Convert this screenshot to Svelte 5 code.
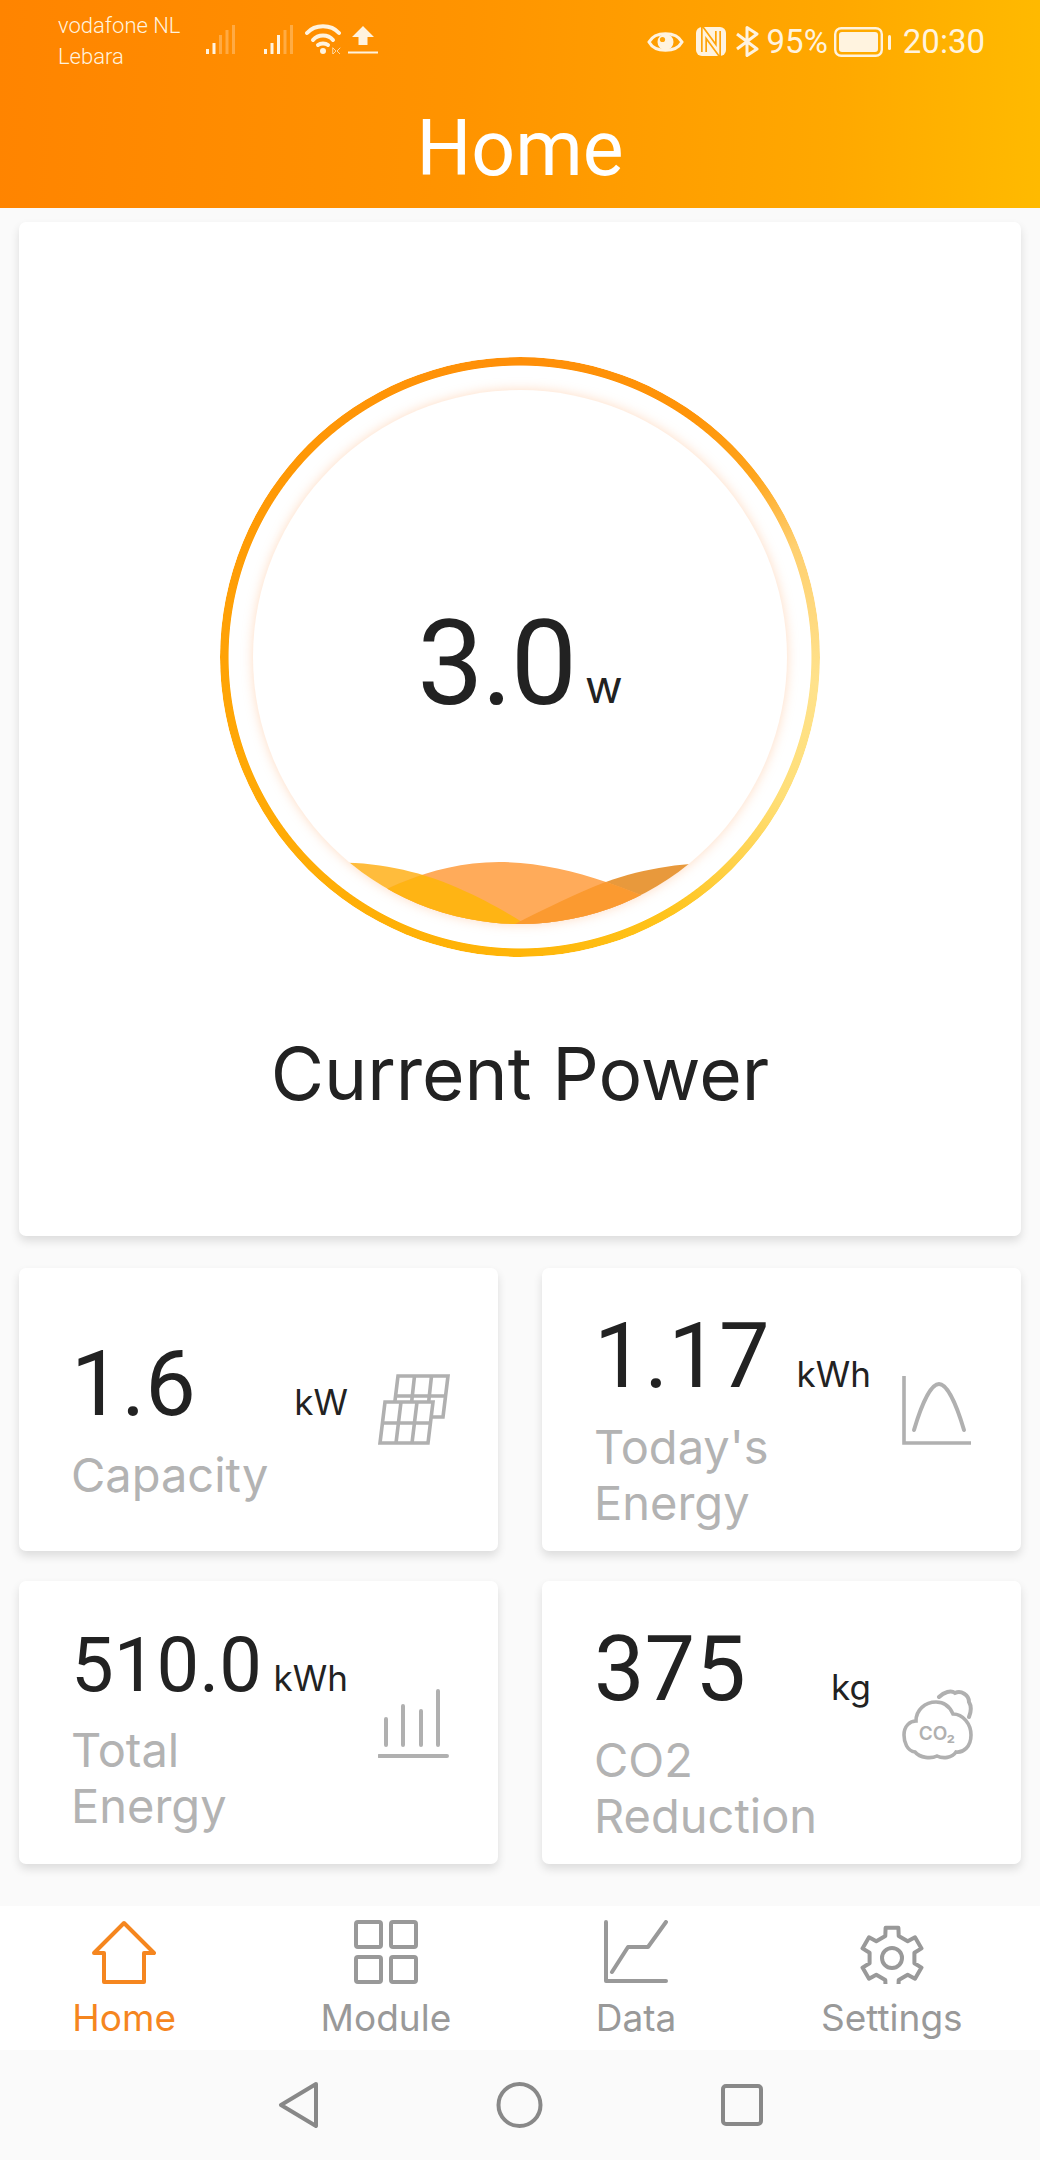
<script>
  const stats = [
    { value: '1.6', unit: 'kW', label: 'Capacity', icon: 'panel' },
    { value: '1.17', unit: 'kWh', label: "Today's Energy", icon: 'curve' },
    { value: '510.0', unit: 'kWh', label: 'Total Energy', icon: 'bars', small: true },
    { value: '375', unit: 'kg', label: 'CO2 Reduction', icon: 'cloud' }
  ];

  const tabs = ['Home', 'Module', 'Data', 'Settings'];

  // six flat teeth round the centre of a 64 box
  function gearPath() {
    const pts = [];
    for (let i = 0; i < 6; i++) {
      const a = (i * 60 - 90) * Math.PI / 180;
      for (const [r, d] of [[23, -17], [31, -12], [31, 12], [23, 17]]) {
        const t = a + d * Math.PI / 180;
        pts.push((32 + r * Math.cos(t)).toFixed(1) + ' ' + (32 + r * Math.sin(t)).toFixed(1));
      }
    }
    return 'M' + pts.join(' L') + ' Z';
  }

  const leftWave = 'M70 473 C120 470 170 482 205 498 C230 509 250 520 272 534 L70 540 Z';
  const midWave = 'M60 540 C110 510 170 472 246 472 C320 472 390 505 470 540 Z';
  const rightWave = 'M460 473 C420 473 375 482 340 497 C310 510 285 522 262 534 L460 540 Z';
</script>

<div class="page">
  <header class="top">
    <div class="status">
      <div class="status-left">
        <div class="carrier">
          <span>vodafone NL</span>
          <span>Lebara</span>
        </div>
        <svg class="signal" width="32" height="30" viewBox="0 0 32 30">
          <rect x="1" y="25" width="3" height="5" />
          <rect x="7.5" y="19" width="3" height="11" />
          <rect class="dim" x="14" y="11" width="3" height="19" />
          <rect class="dim" x="20.5" y="6" width="3" height="24" />
          <rect class="dim" x="27" y="1" width="3" height="29" />
        </svg>
        <svg class="signal second" width="32" height="30" viewBox="0 0 32 30">
          <rect x="1" y="25" width="3" height="5" />
          <rect x="7.5" y="19" width="3" height="11" />
          <rect x="14" y="11" width="3" height="19" />
          <rect class="dim" x="20.5" y="6" width="3" height="24" />
          <rect class="dim" x="27" y="1" width="3" height="29" />
        </svg>
        <svg class="wifi" width="36" height="30" viewBox="0 0 36 30">
          <path d="M2 9 C10 0 26 0 34 9" />
          <path d="M8 16 C13 10 23 10 28 16" />
          <path d="M13 21 C15.5 19 20.5 19 23 21" />
          <circle cx="18" cy="27" r="3" />
          <path class="tiny" d="M28 24 L31 27 L28 30 Z M35 24 L32 27 L35 30" />
        </svg>
        <svg class="upload" width="30" height="30" viewBox="0 0 30 30">
          <path d="M15 2 L26 13 H19.5 V21 H10.5 V13 H4 Z" />
          <rect x="0" y="27.5" width="30" height="2" />
        </svg>
      </div>
      <div class="status-right">
        <svg class="eye" width="37" height="28" viewBox="0 0 37 28">
          <path d="M2 14 C8 3 29 3 35 14 C29 25 8 25 2 14 Z" />
          <circle cx="18.5" cy="14" r="8" />
          <circle class="glint" cx="15.5" cy="11.5" r="2.6" />
        </svg>
        <svg class="nfc" width="30" height="29" viewBox="0 0 30 29">
          <rect width="30" height="29" rx="6" />
          <path class="n-edge" d="M8 25 V5 L22 24 V4" />
          <path class="n-core" d="M8 25 V5 L22 24 V4" />
        </svg>
        <svg class="bt" width="24" height="31" viewBox="0 0 24 31">
          <path d="M2 8 L22 23 L12 29.5 V1.5 L22 8 L2 23" />
        </svg>
        <span class="pct">95%</span>
        <svg class="battery" width="57" height="30" viewBox="0 0 57 30">
          <rect class="shell" x="1.2" y="1.2" width="46.6" height="27.6" rx="6" />
          <rect x="5" y="5" width="39" height="20" rx="3" />
          <rect x="54" y="8" width="3" height="15" rx="1.5" />
        </svg>
        <span class="clock">20:30</span>
      </div>
    </div>
    <h1>Home</h1>
  </header>

  <main>
    <section class="card power">
      <div class="ring-wrap">
        <div class="ring"></div>
        <div class="inner">
          <svg width="534" height="534" viewBox="0 0 534 534">
            <defs>
              <clipPath id="disc"><circle cx="267" cy="267" r="267" /></clipPath>
              <clipPath id="mid"><path d={midWave} /></clipPath>
            </defs>
            <g clip-path="url(#disc)">
              <path d={leftWave} fill="#ffbc3c" />
              <path d={rightWave} fill="#e8993c" />
              <path d={midWave} fill="#ffab5a" />
              <g clip-path="url(#mid)">
                <path d={leftWave} fill="#ffb414" />
                <path d={rightWave} fill="#fb9a30" />
              </g>
            </g>
          </svg>
        </div>
        <div class="reading">
          <span class="num">3.0</span>
          <span class="w">w</span>
        </div>
      </div>
      <p class="power-label">Current Power</p>
    </section>

    <section class="grid">
      {#each stats as s}
        <div class="card stat">
          <div class="text" class:small={s.small}>
            <div class="row">
              <span class="value">{s.value}</span>
              <span class="unit">{s.unit}</span>
            </div>
            <div class="label">{s.label}</div>
          </div>
          <svg class="stat-icon" width="72" height="74" viewBox="0 0 72 74">
            {#if s.icon === 'panel'}
              <path class="fillw" d="M20 3 H70 L65 44 H15 Z" />
              <path d="M36.5 3 L32 44 M53.5 3 L49 44 M17 23 H68" />
              <path class="fillw" d="M7 29 H55 L50 70 H2 Z" />
              <path d="M23 29 L18 70 M39 29 L34 70 M4.5 50 H52.5" />
            {:else if s.icon === 'curve'}
              <path d="M3 3 V70 H70" />
              <path class="round" d="M13 57 C21 30 30 11 38 11 C46 11 55 30 63 57" />
            {:else if s.icon === 'bars'}
              <path class="round" d="M8 59 V33 M25 59 V20 M43 59 V25 M60 59 V5 M1 70 H69" />
            {:else}
              <path d="M14 66 C6 65 3 56 3 49 C3 40 9 35 15 35 C15 24 24 16 35 16 C43 16 49 21 52 28 C62 28 70 38 70 49 C70 61 62 67 55 66 C51 72 42 73 36 70 C30 73 19 72 14 66 Z" />
              <path class="round" d="M38 11 C43 6 50 4 54 7 C60 4 68 9 68 16 C71 21 70 26 68 31" />
              <text x="36" y="54" text-anchor="middle">CO₂</text>
            {/if}
          </svg>
        </div>
      {/each}
    </section>
  </main>

  <nav class="tabs">
    {#each tabs as t, i}
      <div class="tab" class:active={i === 0}>
        <svg width="64" height="64" viewBox="0 0 64 64">
          {#if i === 0}
            <path d="M32 3 L62 33 H52 V62 H12 V33 H2 Z" />
          {:else if i === 1}
            <rect x="2" y="2" width="25" height="25" rx="2" />
            <rect x="37" y="2" width="25" height="25" rx="2" />
            <rect x="2" y="37" width="25" height="25" rx="2" />
            <rect x="37" y="37" width="25" height="25" rx="2" />
          {:else if i === 2}
            <path d="M2 2 V61 H62" />
            <path d="M8 52 L24 27 H44 L62 2" />
          {:else}
            <g transform="translate(0 6)">
              <path d={gearPath()} />
              <circle cx="32" cy="32" r="10" />
            </g>
          {/if}
        </svg>
        <span>{t}</span>
      </div>
    {/each}
  </nav>

  <footer class="sysnav">
    <svg width="40" height="46" viewBox="0 0 40 46"><path d="M38 2 L3 23 L38 44 Z" /></svg>
    <svg width="47" height="46" viewBox="0 0 47 46"><circle cx="23.5" cy="23" r="21" /></svg>
    <svg width="42" height="46" viewBox="0 0 42 46"><rect x="2" y="4" width="38" height="38" rx="3" /></svg>
  </footer>
</div>

<style>
  :global(body) {
    margin: 0;
    background: #fafafa;
  }

  .page {
    width: 1040px;
    height: 2160px;
    display: flex;
    flex-direction: column;
    font-family: Inter, "Noto Sans", sans-serif;
    color: #222;
  }

  .top {
    height: 208px;
    box-sizing: border-box;
    padding-top: 10px;
    background: linear-gradient(92deg, #ff8400 0%, #ff9400 45%, #ffa800 80%, #ffba00 100%);
    color: #fff;
  }

  .status {
    display: flex;
    justify-content: space-between;
    align-items: flex-start;
    padding: 0 55px 0 58px;
    height: 62px;
  }
  .status-left, .status-right {
    display: flex;
  }
  .status-left { align-items: flex-start; }
  .status-right {
    align-items: center;
    padding-top: 12px;
    color: #fff3df;
    font-size: 33px;
    font-family: Roboto, sans-serif;
  }
  .carrier {
    display: flex;
    flex-direction: column;
    width: 147px;
    font-size: 22px;
    line-height: 31px;
    font-family: Roboto, sans-serif;
    font-weight: 300;
    color: #fff3df;
  }
  .signal { margin-top: 14px; fill: #fff3df; }
  .signal .dim { opacity: .3; }
  .signal.second { margin-left: 26px; }
  .wifi { margin: 14px 0 0 10px; fill: #fff3df; }
  .wifi path { fill: none; stroke: #fff3df; stroke-width: 4; stroke-linecap: round; }
  .wifi .tiny { stroke-width: 1; opacity: .7; }
  .upload { margin: 14px 0 0 7px; fill: #fff3df; }

  .eye path { fill: none; stroke: #fff3df; stroke-width: 3; }
  .eye circle { fill: #fff3df; }
  .eye .glint { fill: #ffa40a; }
  .nfc { margin-left: 12px; }
  .nfc rect { fill: #fff3df; }
  .nfc path { fill: none; }
  .nfc .n-edge { stroke: #ffa40a; stroke-width: 6; }
  .nfc .n-core { stroke: #fff3df; stroke-width: 2.6; }
  .bt { margin-left: 9px; }
  .bt path { fill: none; stroke: #fff3df; stroke-width: 3; stroke-linejoin: round; }
  .pct { margin-left: 8px; }
  .battery { margin-left: 6px; fill: #fff3df; }
  .battery .shell { fill: none; stroke: #fff3df; stroke-width: 2.4; }
  .clock { margin-left: 12px; }

  h1 {
    margin: 32px 0 0;
    text-align: center;
    font-family: Roboto, sans-serif;
    font-weight: 400;
    font-size: 77px;
    line-height: 90px;
  }

  main {
    flex: 1;
    padding: 14px 19px 0;
  }

  .card {
    background: #fff;
    border-radius: 7px;
    box-shadow: 0 5px 10px rgba(0, 0, 0, .12);
  }

  .power {
    height: 1014px;
    box-sizing: border-box;
    padding-top: 135px;
    display: flex;
    flex-direction: column;
    align-items: center;
  }
  .ring-wrap {
    position: relative;
    width: 600px;
    height: 600px;
  }
  .ring {
    position: absolute;
    inset: 0;
    border-radius: 50%;
    background: conic-gradient(#ff8f08 0deg, #ff9408 35deg, #ffa51c 52deg, #ffd070 68deg, #ffe28c 95deg, #ffdf78 118deg, #ffc41c 150deg, #ffb508 180deg, #ffa806 250deg, #ff9a06 300deg, #ff8f08 360deg);
    mask: radial-gradient(closest-side, transparent 97%, #000 97.3%);
  }
  .inner {
    position: absolute;
    left: 33px;
    top: 33px;
    width: 534px;
    height: 534px;
    border-radius: 50%;
    box-shadow: 0 0 12px rgba(255, 165, 100, .4);
  }
  .inner svg { display: block; }
  .reading {
    position: absolute;
    inset: 14px 0 0;
    display: flex;
    justify-content: center;
    align-items: center;
    gap: 10px;
  }
  .num {
    font-family: Roboto, sans-serif;
    font-size: 118px;
    letter-spacing: -2px;
    line-height: 1;
  }
  .w {
    font-size: 46px;
    margin-top: 44px;
  }
  .power-label {
    margin: 77px 0 0;
    font-size: 73px;
    line-height: 80px;
  }

  .grid {
    margin-top: 32px;
    display: grid;
    grid-template-columns: 479px 479px;
    grid-auto-rows: 283px;
    column-gap: 44px;
    row-gap: 30px;
  }
  .stat {
    display: flex;
    align-items: center;
    padding-left: 52px;
  }
  .text {
    width: 277px;
    margin-right: 30px;
    padding-top: 24px;
  }
  .row {
    display: flex;
    justify-content: space-between;
    align-items: baseline;
    height: 90px;
    line-height: 90px;
  }
  .value {
    font-family: Roboto, sans-serif;
    font-size: 90px;
  }
  .text.small { padding-top: 14px; }
  .small .row {
    height: 80px;
    line-height: 80px;
  }
  .small .value { font-size: 76px; }
  .unit { font-size: 35px; }
  .label {
    margin-top: 17px;
    width: 240px;
    font-size: 47px;
    line-height: 56px;
    color: #b3b3b3;
  }
  .stat-icon { flex-shrink: 0; }
  .stat-icon path {
    fill: none;
    stroke: #b0b0b0;
    stroke-width: 3.6;
  }
  .stat-icon .fillw { fill: #fff; }
  .stat-icon .round { stroke-linecap: round; stroke-width: 4; }
  .stat-icon text {
    font-size: 19px;
    font-weight: 600;
    fill: #b0b0b0;
  }

  .tabs {
    height: 144px;
    box-sizing: border-box;
    padding-right: 5px;
    background: #fff;
    display: flex;
    justify-content: space-around;
  }
  .tab {
    display: flex;
    flex-direction: column;
    align-items: center;
    padding-top: 14px;
    font-size: 37px;
    line-height: 52px;
    color: #999;
  }
  .tab span { margin-top: 8px; }
  .tab svg {
    fill: none;
    stroke: #999;
    stroke-width: 4;
    stroke-linejoin: round;
    stroke-linecap: round;
  }
  .tab.active { color: #f5861f; }
  .tab.active svg { stroke: #f5861f; }

  .sysnav {
    height: 110px;
    display: flex;
    justify-content: center;
    align-items: center;
    gap: 178px;
  }
  .sysnav svg {
    fill: none;
    stroke: #888;
    stroke-width: 4;
    stroke-linejoin: round;
  }
</style>
